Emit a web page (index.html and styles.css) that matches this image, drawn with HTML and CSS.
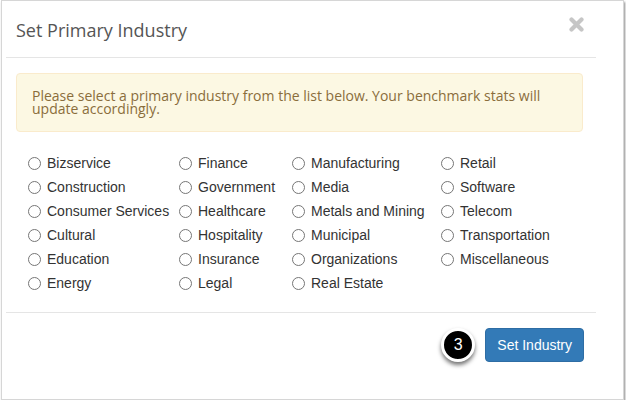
FILE: index.html
```html
<!DOCTYPE html>
<html>
<head>
<meta charset="utf-8">
<link rel="stylesheet" href="styles.css">
</head>
<body>
<div class="modal">
  <div class="dialog">
    <div class="modal-header">
      <h4 class="modal-title">Set Primary Industry</h4>
      <span class="close" aria-label="Close">
        <svg width="15" height="15" viewBox="0 0 15 15"><path d="M2.5 2.5 L12.5 12.5 M12.5 2.5 L2.5 12.5" stroke="#c6c6c6" stroke-width="4.2" stroke-linecap="round"/></svg>
      </span>
    </div>
    <div class="modal-body">
      <div class="alert">Please select a primary industry from the list below. Your benchmark stats will update accordingly.</div>
      <div class="options">
        <label class="opt"><span class="radio"></span>Bizservice</label>
        <label class="opt"><span class="radio"></span>Finance</label>
        <label class="opt"><span class="radio"></span>Manufacturing</label>
        <label class="opt"><span class="radio"></span>Retail</label>
        <label class="opt"><span class="radio"></span>Construction</label>
        <label class="opt"><span class="radio"></span>Government</label>
        <label class="opt"><span class="radio"></span>Media</label>
        <label class="opt"><span class="radio"></span>Software</label>
        <label class="opt"><span class="radio"></span>Consumer Services</label>
        <label class="opt"><span class="radio"></span>Healthcare</label>
        <label class="opt"><span class="radio"></span>Metals and Mining</label>
        <label class="opt"><span class="radio"></span>Telecom</label>
        <label class="opt"><span class="radio"></span>Cultural</label>
        <label class="opt"><span class="radio"></span>Hospitality</label>
        <label class="opt"><span class="radio"></span>Municipal</label>
        <label class="opt"><span class="radio"></span>Transportation</label>
        <label class="opt"><span class="radio"></span>Education</label>
        <label class="opt"><span class="radio"></span>Insurance</label>
        <label class="opt"><span class="radio"></span>Organizations</label>
        <label class="opt"><span class="radio"></span>Miscellaneous</label>
        <label class="opt"><span class="radio"></span>Energy</label>
        <label class="opt"><span class="radio"></span>Legal</label>
        <label class="opt"><span class="radio"></span>Real Estate</label>
      </div>
    </div>
    <div class="modal-footer">
      <span class="badge">3</span>
      <button class="btn">Set Industry</button>
    </div>
  </div>
</div>
</body>
</html>
```

FILE: styles.css
```css
html, body {
  margin: 0;
  padding: 0;
  background: #ffffff;
}

.modal {
  box-sizing: border-box;
  width: 623px;
  height: 400px;
  margin-left: 1px;
  border: 1px solid #d6d6d6;
  box-shadow: 1px 2px 2px rgba(0, 0, 0, 0.45);
  background: #ffffff;
}

.dialog {
  width: 590px;
  margin-left: 4px;
}

.modal-header {
  box-sizing: border-box;
  height: 57px;
  padding: 0 12px 0 10px;
  border-bottom: 1px solid #e5e5e5;
  display: flex;
  align-items: center;
  justify-content: space-between;
}

.modal-title {
  margin: 0;
  font-family: "Open Sans", sans-serif;
  font-weight: 400;
  font-size: 18px;
  line-height: 20px;
  color: #555555;
  padding-top: 1px;
}

.close {
  display: block;
  width: 15px;
  height: 15px;
  align-self: flex-start;
  margin-top: 16px;
}

.close svg {
  display: block;
}

.modal-body {
  padding: 15px 13px 17px 10px;
}

.alert {
  border: 1px solid #faebcc;
  background: #fcf8e3;
  border-radius: 4px;
  padding: 15px 15px 16px;
  font-family: "Open Sans", sans-serif;
  font-size: 14px;
  line-height: 13px;
  color: #8a6d3b;
}

.options {
  margin: 19px 0 0 12px;
  display: grid;
  grid-template-columns: 151px 113px 149px auto;
  grid-auto-rows: 24px;
  font-family: "Liberation Sans", Arial, sans-serif;
  font-size: 14px;
  line-height: 24px;
  color: #333333;
}

.opt {
  display: flex;
  align-items: center;
  white-space: nowrap;
}

.radio {
  box-sizing: border-box;
  width: 13px;
  height: 13px;
  border: 1px solid #767676;
  border-radius: 50%;
  margin-right: 6px;
  flex: none;
}

.modal-footer {
  border-top: 1px solid #e5e5e5;
  padding: 15px 12px 0 0;
  display: flex;
  justify-content: flex-end;
  align-items: center;
  gap: 10px;
}

.badge {
  box-sizing: border-box;
  width: 34px;
  height: 34px;
  border-radius: 50%;
  background: #000000;
  border: 3px solid #ffffff;
  box-shadow: 0 3px 4px rgba(0, 0, 0, 0.55);
  color: #ffffff;
  font-family: "Liberation Sans", Arial, sans-serif;
  font-size: 16px;
  display: flex;
  align-items: center;
  justify-content: center;
}

.btn {
  box-sizing: border-box;
  height: 34px;
  padding: 6px 11px;
  background: #337ab7;
  border: 1px solid #2e6da4;
  border-radius: 4px;
  color: #ffffff;
  font-family: "Liberation Sans", Arial, sans-serif;
  font-size: 14px;
  line-height: 20px;
}
```
